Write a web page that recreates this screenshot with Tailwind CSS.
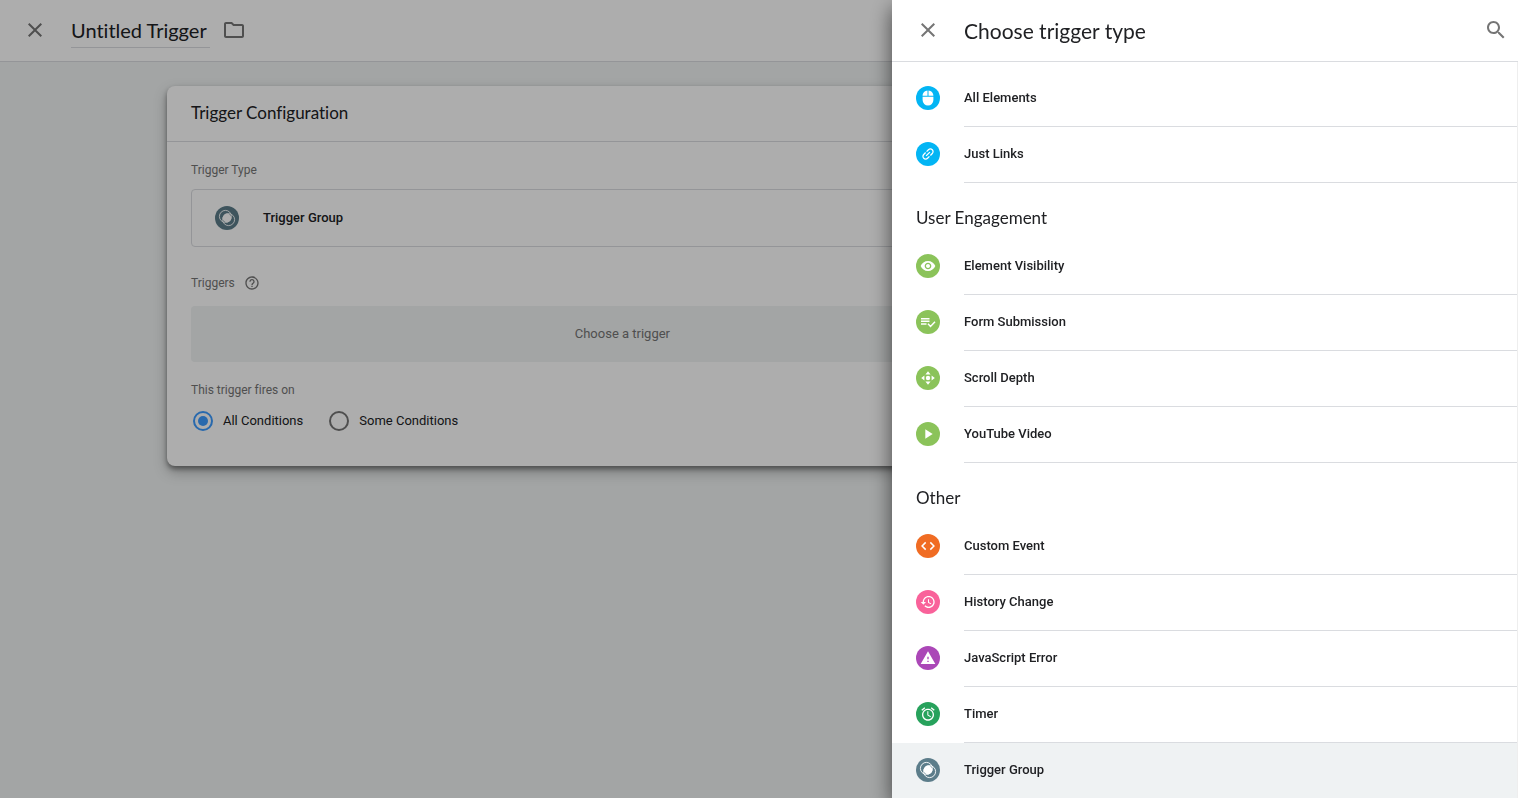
<!DOCTYPE html>
<html lang="en">
<head>
    <meta charset="UTF-8">
    <meta name="viewport" content="width=device-width, initial-scale=1.0">
    <title>Untitled Trigger</title>
    <script src="https://cdn.jsdelivr.net/npm/@tailwindcss/browser@4"></script>
</head>
<body class="h-screen overflow-hidden bg-[#f0f3f3] font-[Roboto,sans-serif] text-[13px] leading-6 text-[#202124] [font-variant-ligatures:none]">
    <!-- Trigger editor -->
    <header class="flex h-[62px] items-start border-b border-[#dadce0] bg-white pl-[23px] pt-3">
        <button class="mt-1.5 text-[#757575]" aria-label="Close">
            <svg class="size-6" viewBox="0 0 24 24" fill="currentColor"><path d="M19 6.41L17.59 5 12 10.59 6.41 5 5 6.41 10.59 12 5 17.59 6.41 19 12 13.41 17.59 19 19 17.59 13.41 12 19 6.41z"/></svg>
        </button>
        <input class="ml-6 h-9 field-sizing-content border-b border-[#dadce0] pr-[3px] font-[Lato,sans-serif] text-[20px] outline-none" type="text" value="Untitled Trigger" aria-label="Trigger name">
        <button class="ml-3 mt-1.5 text-[#757575]" aria-label="Move to folder">
            <svg class="size-6" viewBox="0 0 24 24" fill="currentColor"><path d="M9.17 6l2 2H20v10H4V6h5.17M10 4H4c-1.1 0-1.99.9-1.99 2L2 18c0 1.1.9 2 2 2h16c1.1 0 2-.9 2-2V8c0-1.1-.9-2-2-2h-8l-2-2z"/></svg>
        </button>
    </header>

    <main class="ml-[11%] mt-6 w-3/5 rounded-lg bg-white shadow-[0_3px_5px_rgba(0,0,0,0.4),0_6px_14px_rgba(0,0,0,0.25)]">
        <h2 class="border-b border-[#dadce0] px-6 pb-4 pt-[15px] font-[Lato,sans-serif] text-[17px] leading-6">Trigger Configuration</h2>
        <div class="px-6 pb-[33px] pt-4">
            <h3 class="text-xs leading-6 text-[#757575]">Trigger Type</h3>
            <button class="mt-[7px] flex h-[58px] w-full items-center gap-6 rounded border border-[#dadce0] px-[23px] font-medium">
                <svg class="size-6" viewBox="0 0 24 24" fill="none">
                    <circle cx="12" cy="12" r="12" fill="#5c7d8a"/>
                    <circle cx="10.4" cy="10.4" r="6" stroke="#fff" stroke-width=".9"/>
                    <circle cx="13.6" cy="13.6" r="6" stroke="#fff" stroke-width=".9"/>
                    <circle cx="12" cy="12" r="4.4" fill="#fff"/>
                </svg>
                Trigger Group
            </button>
            <h3 class="mt-6 flex items-center gap-[9px] text-xs leading-6 text-[#757575]">
                Triggers
                <svg class="size-4" viewBox="0 0 24 24" fill="currentColor"><path d="M11 18h2v-2h-2v2zm1-16C6.48 2 2 6.48 2 12s4.48 10 10 10 10-4.48 10-10S17.52 2 12 2zm0 18c-4.41 0-8-3.59-8-8s3.59-8 8-8 8 3.59 8 8-3.59 8-8 8zm0-14c-2.21 0-4 1.79-4 4h2c0-1.1.9-2 2-2s2 .9 2 2c0 2-3 1.75-3 5h2c0-2.25 3-2.5 3-5 0-2.21-1.79-4-4-4z"/></svg>
            </h3>
            <button class="mt-[11px] h-14 w-full rounded-sm bg-[#f0f3f3] text-[#757575]">Choose a trigger</button>
            <fieldset>
                <legend class="pt-4 text-xs leading-6 text-[#757575]">This trigger fires on</legend>
                <div class="mt-[7px] flex gap-[26px] pl-0.5">
                    <label class="flex items-center gap-[10px]">
                        <input class="size-5 appearance-none rounded-full border-2 border-[#757575] bg-clip-content p-[3px] checked:border-[#3c9bff] checked:bg-[#3c9bff]" type="radio" name="fires" checked>
                        All Conditions
                    </label>
                    <label class="flex items-center gap-[10px]">
                        <input class="size-5 appearance-none rounded-full border-2 border-[#757575] bg-clip-content p-[3px] checked:border-[#3c9bff] checked:bg-[#3c9bff]" type="radio" name="fires">
                        Some Conditions
                    </label>
                </div>
            </fieldset>
        </div>
    </main>

    <div class="fixed inset-0 bg-black/32"></div>

    <!-- Trigger type picker -->
    <aside class="fixed inset-y-0 right-0 flex w-[626px] flex-col bg-white shadow-[0_8px_20px_rgba(0,0,0,0.6)]">
        <header class="flex h-[62px] shrink-0 items-center border-b border-[#dadce0] pb-0.5 pl-6 pr-[10px]">
            <button class="text-[#757575]" aria-label="Close">
                <svg class="size-6" viewBox="0 0 24 24" fill="currentColor"><path d="M19 6.41L17.59 5 12 10.59 6.41 5 5 6.41 10.59 12 5 17.59 6.41 19 12 13.41 17.59 19 19 17.59 13.41 12 19 6.41z"/></svg>
            </button>
            <h1 class="ml-6 grow pt-0.5 font-[Lato,sans-serif] text-[21px]">Choose trigger type</h1>
            <button class="text-[#757575]" aria-label="Search">
                <svg class="size-6" viewBox="0 0 24 24" fill="currentColor"><path d="M15.5 14h-.79l-.28-.27C15.41 12.59 16 11.11 16 9.5 16 5.91 13.09 3 9.5 3S3 5.91 3 9.5 5.91 16 9.5 16c1.61 0 3.09-.59 4.23-1.57l.27.28v.79l5 4.99L20.49 19l-4.99-5zm-6 0C7.01 14 5 11.99 5 9.5S7.01 5 9.5 5 14 7.01 14 9.5 11.99 14 9.5 14z"/></svg>
            </button>
        </header>

        <div class="grow overflow-hidden border-r border-[#eeeeee] pt-[9px] font-medium">
            <button class="flex h-14 w-full gap-6 pl-6 text-left">
                <svg class="mt-[15px] size-6 shrink-0" viewBox="0 0 24 24" fill="none">
                    <circle cx="12" cy="12" r="12" fill="#03b5f4"/>
                    <path d="M11.5 4.5v5.2H6.6C6.6 6.9 8.8 4.7 11.5 4.5zM12.5 4.5v5.2h4.9c0-2.8-2.2-5-4.9-5.2zM6.6 10.7h10.8v3.4a5.4 5.4 0 0 1-10.8 0z" fill="#fff"/>
                </svg>
                <span class="grow border-b border-[#dadce0] pt-[15px]">All Elements</span>
            </button>
            <button class="flex h-14 w-full gap-6 pl-6 text-left">
                <svg class="mt-[15px] size-6 shrink-0" viewBox="0 0 24 24" fill="none">
                    <circle cx="12" cy="12" r="12" fill="#03b5f4"/>
                    <path transform="rotate(-45 12 12) translate(4 4) scale(.667)" d="M3.9 12c0-1.71 1.39-3.1 3.1-3.1h4V7H7c-2.76 0-5 2.24-5 5s2.24 5 5 5h4v-1.9H7c-1.71 0-3.1-1.39-3.1-3.1zM8 13h8v-2H8v2zm9-6h-4v1.9h4c1.71 0 3.1 1.39 3.1 3.1s-1.39 3.1-3.1 3.1h-4V17h4c2.76 0 5-2.24 5-5s-2.24-5-5-5z" fill="#fff"/>
                </svg>
                <span class="grow border-b border-[#dadce0] pt-[15px]">Just Links</span>
            </button>

            <h2 class="h-14 pl-6 pt-[23px] font-[Lato,sans-serif] text-[17px] font-normal">User Engagement</h2>
            <button class="flex h-14 w-full gap-6 pl-6 text-left">
                <svg class="mt-[15px] size-6 shrink-0" viewBox="0 0 24 24" fill="none">
                    <circle cx="12" cy="12" r="12" fill="#8bc35a"/>
                    <path transform="translate(4 4) scale(.667)" d="M12 4.5C7 4.5 2.73 7.61 1 12c1.73 4.39 6 7.5 11 7.5s9.27-3.11 11-7.5c-1.73-4.39-6-7.5-11-7.5zM12 17c-2.76 0-5-2.24-5-5s2.24-5 5-5 5 2.24 5 5-2.24 5-5 5zm0-8c-1.66 0-3 1.34-3 3s1.34 3 3 3 3-1.34 3-3-1.34-3-3-3z" fill="#fff"/>
                </svg>
                <span class="grow border-b border-[#dadce0] pt-[15px]">Element Visibility</span>
            </button>
            <button class="flex h-14 w-full gap-6 pl-6 text-left">
                <svg class="mt-[15px] size-6 shrink-0" viewBox="0 0 24 24" fill="none">
                    <circle cx="12" cy="12" r="12" fill="#8bc35a"/>
                    <path d="M5 8.7h8.5M5 11.3h8.5M5 14h5.5M12 13.8l2.5 2.6 4.5-4.6" stroke="#fff" stroke-width="1.5"/>
                </svg>
                <span class="grow border-b border-[#dadce0] pt-[15px]">Form Submission</span>
            </button>
            <button class="flex h-14 w-full gap-6 pl-6 text-left">
                <svg class="mt-[15px] size-6 shrink-0" viewBox="0 0 24 24" fill="none">
                    <circle cx="12" cy="12" r="12" fill="#8bc35a"/>
                    <path d="M12 5.2l2.6 3.2H9.4zM12 18.8l2.6-3.2H9.4zM5.2 12l3.2-2.6v5.2zM18.8 12l-3.2-2.6v5.2z" fill="#fff"/>
                    <circle cx="12" cy="12" r="2.2" fill="#fff"/>
                </svg>
                <span class="grow border-b border-[#dadce0] pt-[15px]">Scroll Depth</span>
            </button>
            <button class="flex h-14 w-full gap-6 pl-6 text-left">
                <svg class="mt-[15px] size-6 shrink-0" viewBox="0 0 24 24" fill="none">
                    <circle cx="12" cy="12" r="12" fill="#8bc35a"/>
                    <path d="M9.3 7.3v9.4l7.4-4.7z" fill="#fff"/>
                </svg>
                <span class="grow border-b border-[#dadce0] pt-[15px]">YouTube Video</span>
            </button>

            <h2 class="h-14 pl-6 pt-[23px] font-[Lato,sans-serif] text-[17px] font-normal">Other</h2>
            <button class="flex h-14 w-full gap-6 pl-6 text-left">
                <svg class="mt-[15px] size-6 shrink-0" viewBox="0 0 24 24" fill="none">
                    <circle cx="12" cy="12" r="12" fill="#f06c23"/>
                    <path d="M9.7 8.4L6.1 12l3.6 3.6M14.3 8.4l3.6 3.6-3.6 3.6" stroke="#fff" stroke-width="1.5"/>
                </svg>
                <span class="grow border-b border-[#dadce0] pt-[15px]">Custom Event</span>
            </button>
            <button class="flex h-14 w-full gap-6 pl-6 text-left">
                <svg class="mt-[15px] size-6 shrink-0" viewBox="0 0 24 24" fill="none">
                    <circle cx="12" cy="12" r="12" fill="#f9629a"/>
                    <path transform="translate(4 4) scale(.667)" d="M13 3c-4.97 0-9 4.03-9 9H1l3.89 3.89.07.14L9 12H6c0-3.87 3.13-7 7-7s7 3.13 7 7-3.13 7-7 7c-1.93 0-3.68-.79-4.94-2.06l-1.42 1.42C8.27 19.99 10.51 21 13 21c4.97 0 9-4.03 9-9s-4.03-9-9-9zm-1 5v5l4.28 2.54.72-1.21-3.5-2.08V8H12z" fill="#fff"/>
                </svg>
                <span class="grow border-b border-[#dadce0] pt-[15px]">History Change</span>
            </button>
            <button class="flex h-14 w-full gap-6 pl-6 text-left">
                <svg class="mt-[15px] size-6 shrink-0" viewBox="0 0 24 24" fill="none">
                    <circle cx="12" cy="12" r="12" fill="#ab47b7"/>
                    <path transform="translate(4 4) scale(.667)" d="M1 21h22L12 2 1 21zm12-3h-2v-2h2v2zm0-4h-2v-4h2v4z" fill="#fff"/>
                </svg>
                <span class="grow border-b border-[#dadce0] pt-[15px]">JavaScript Error</span>
            </button>
            <button class="flex h-14 w-full gap-6 pl-6 text-left">
                <svg class="mt-[15px] size-6 shrink-0" viewBox="0 0 24 24" fill="none">
                    <circle cx="12" cy="12" r="12" fill="#27a25c"/>
                    <path transform="translate(4 4) scale(.667)" d="M22 5.72l-4.6-3.86-1.29 1.53 4.6 3.86L22 5.72zM7.88 3.39L6.6 1.86 2 5.71l1.29 1.53 4.59-3.85zM12.5 8H11v6l4.75 2.85.75-1.23-4-2.37V8zM12 4c-4.97 0-9 4.03-9 9s4.02 9 9 9c4.97 0 9-4.03 9-9s-4.03-9-9-9zm0 16c-3.87 0-7-3.13-7-7s3.13-7 7-7 7 3.13 7 7-3.13 7-7 7z" fill="#fff"/>
                </svg>
                <span class="grow border-b border-[#dadce0] pt-[15px]">Timer</span>
            </button>
            <button class="flex h-14 w-full gap-6 bg-[#eff2f3] pl-6 text-left">
                <svg class="mt-[15px] size-6 shrink-0" viewBox="0 0 24 24" fill="none">
                    <circle cx="12" cy="12" r="12" fill="#5c7d8a"/>
                    <circle cx="10.4" cy="10.4" r="6" stroke="#fff" stroke-width=".9"/>
                    <circle cx="13.6" cy="13.6" r="6" stroke="#fff" stroke-width=".9"/>
                    <circle cx="12" cy="12" r="4.4" fill="#fff"/>
                </svg>
                <span class="grow border-b border-[#dadce0] pt-[15px]">Trigger Group</span>
            </button>
        </div>
    </aside>
</body>
</html>
